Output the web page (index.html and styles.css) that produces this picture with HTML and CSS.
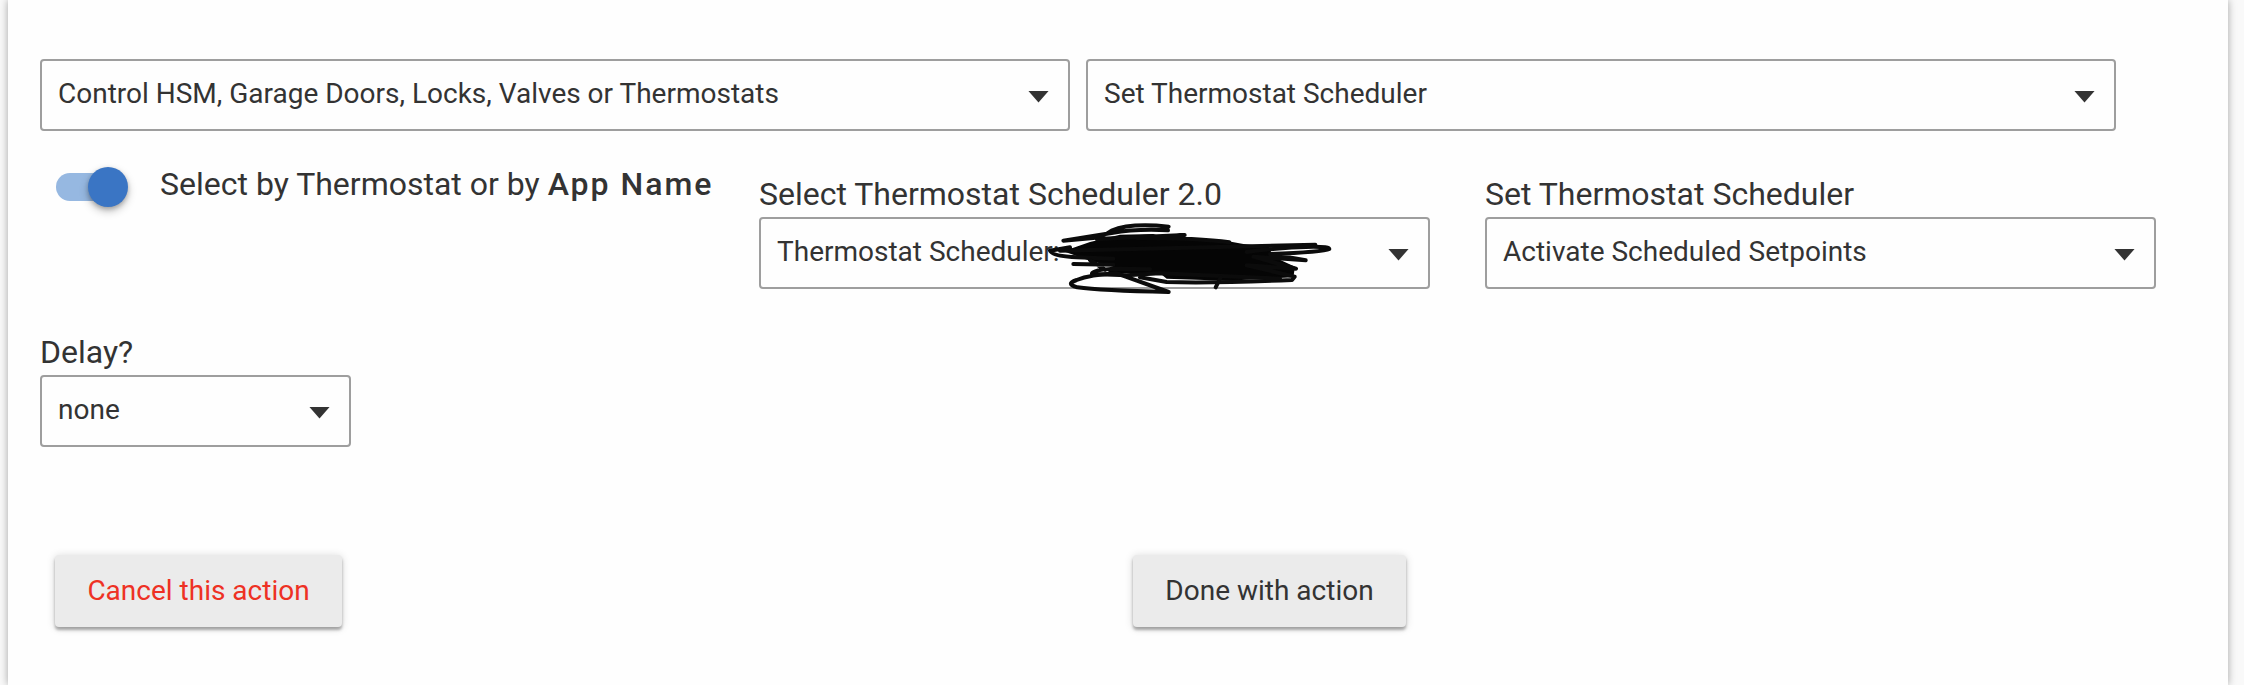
FILE: index.html
```html
<!DOCTYPE html>
<html lang="en">
<head>
    <meta charset="UTF-8">
    <title>Rule Action</title>
    <link rel="stylesheet" href="styles.css">
</head>
<body>
    <div class="card">
        <div class="row types">
            <div class="select wide">Control HSM, Garage Doors, Locks, Valves or Thermostats <span class="arrow"></span></div>
            <div class="select wide">Set Thermostat Scheduler <span class="arrow"></span></div>
        </div>

        <div class="row options">
            <div class="toggle">
                <span class="track"><span class="thumb"></span></span>
                <span class="toggle-label">Select by Thermostat or by <b>App Name</b></span>
            </div>
            <div class="field">
                <div class="label">Select Thermostat Scheduler 2.0</div>
                <div class="select">Thermostat Scheduler: <span class="arrow"></span>
                    <svg class="scribble" viewBox="190 540 880 240">
                        <path class="ink" d="M250 634L330 606L420 584L520 582L560 596L745 604L790 612L866 620L880 650L945 680L940 712L740 722L560 716L540 700L380 700L400 680L330 662Z"/>
                        <path d="M566 560Q450 548 395 572Q370 590 340 594L250 602L395 579Q470 566 564 571"/>
                        <path d="M350 597L614 585L470 594Q660 594 748 607"/>
                        <path d="M270 622L210 632Q216 648 290 652L400 656M240 632L1006 614"/>
                        <path d="M800 636Q900 622 1000 620Q1048 620 1048 627Q1030 636 870 642L977 661L820 650L948 686L800 676L944 710L936 720Q700 730 560 726L480 712"/>
                        <path d="M280 672L400 674M330 660L376 690M336 700Q340 688 410 686L510 688M336 702L440 706L540 700L900 716"/>
                        <path d="M566 756Q360 752 292 742Q254 732 290 720Q330 704 410 700L566 756"/>
                        <path d="M722 712L707 742"/>
                    </svg>
                </div>
            </div>
            <div class="field">
                <div class="label">Set Thermostat Scheduler</div>
                <div class="select">Activate Scheduled Setpoints <span class="arrow"></span></div>
            </div>
        </div>

        <div class="delay">
            <div class="label">Delay?</div>
            <div class="select">none <span class="arrow"></span></div>
        </div>

        <div class="buttons">
            <button class="btn cancel">Cancel this action</button>
            <button class="btn done">Done with action</button>
        </div>
    </div>
</body>
</html>
```

FILE: styles.css
```css
* {
    box-sizing: border-box;
}
body {
    margin: 0;
    background-color: #f9f9f9;
    font-family: Roboto, sans-serif;
    color: #333;
    overflow: hidden;
}
.card {
    width: 2220px;
    height: 685px;
    margin-left: 8px;
    padding: 59px 32px 0;
    background-color: #fefefe;
    box-shadow: 0 0 8px rgba(0, 0, 0, 0.35);
}
.row {
    display: flex;
}
.types {
    gap: 16px;
}
.select {
    position: relative;
    display: flex;
    align-items: center;
    justify-content: space-between;
    height: 72px;
    padding: 0 19px 3px 16px;
    border: 2px solid #9e9e9e;
    border-radius: 4px;
    font-size: 28px;
    white-space: nowrap;
}
.wide {
    width: 1030px;
}
.arrow {
    width: 21px;
    height: 12px;
    margin-top: 6px;
    background-color: #333;
    clip-path: polygon(0 0, 100% 0, 50% 100%);
}
.label {
    height: 42px;
    font-size: 32px;
    line-height: 38px;
    white-space: nowrap;
}
.options {
    margin-top: 36px;
}
.toggle {
    display: flex;
    flex-shrink: 0;
    width: 719px;
    height: 40px;
    padding-left: 16px;
}
.track {
    position: relative;
    width: 64px;
    height: 28px;
    margin-top: 6px;
    border-radius: 14px;
    background-color: #96b8e1;
}
.thumb {
    position: absolute;
    top: -6px;
    left: 32px;
    width: 40px;
    height: 40px;
    border-radius: 50%;
    background-color: #3a75c4;
    box-shadow: 0 4px 8px rgba(0, 0, 0, 0.25), 0 2px 4px rgba(0, 0, 0, 0.2);
}
.toggle-label {
    margin-left: 40px;
    font-size: 32px;
    line-height: 35px;
    white-space: nowrap;
}
.toggle-label b {
    font-weight: 500;
    letter-spacing: 2px;
}
.field {
    flex-shrink: 0;
    width: 671px;
    margin: 8px 55px 0 0;
}
.scribble {
    position: absolute;
    left: 282px;
    top: 1px;
    width: 294px;
    height: 80px;
    fill: none;
    stroke: #0b0b0b;
    stroke-width: 12;
    stroke-linecap: round;
    stroke-linejoin: round;
}
.ink {
    fill: #050505;
    stroke: none;
}
.delay {
    width: 311px;
    margin-top: 44px;
}
.buttons {
    display: flex;
    margin: 108px 0 0 15px;
}
.btn {
    height: 72px;
    padding: 0 0 2px;
    border: none;
    border-radius: 4px;
    background-color: #ebebeb;
    box-shadow: 0 3px 3px rgba(0, 0, 0, 0.3), 0 1px 8px rgba(0, 0, 0, 0.16);
    font-family: inherit;
    font-size: 28px;
    color: #333;
}
.cancel {
    width: 287px;
    margin-right: 791px;
    color: #ee3124;
}
.done {
    width: 273px;
}
```
